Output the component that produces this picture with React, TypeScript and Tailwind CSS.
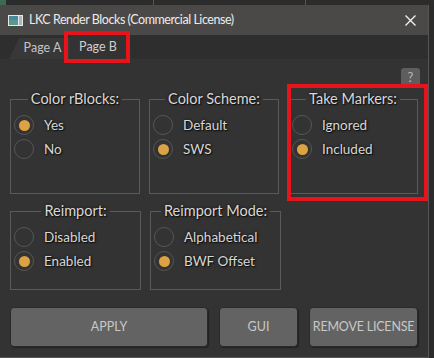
import React from "react";

const font = { fontFamily: 'Lato, "Noto Sans", "Liberation Sans", sans-serif' };

function Radio({ label, checked }: { label: string; checked?: boolean }) {
  return (
    <div className="flex items-center h-[24px]">
      <div className="w-[20px] h-[20px] rounded-full border border-[#565656] flex items-center justify-center shrink-0">
        {checked && <div className="w-[11px] h-[11px] rounded-full bg-[#dca243]" />}
      </div>
      <span className="ml-[10px] text-[13.5px] text-[#d6d6d6] [text-shadow:0_0_3px_#111,1px_1px_1px_#111]">{label}</span>
    </div>
  );
}

function Group({ title, items, sel, h }: { title: string; items: string[]; sel: number; h: number }) {
  return (
    <fieldset
      className="border border-[#5a5a5a] w-[131px] px-[3px] pt-[5px] m-0"
      style={{ height: h }}
    >
      <legend className="mx-auto px-[3px] text-[14.5px] leading-[18px] text-[#d8d8d8] [text-shadow:0_0_3px_#111,1px_1px_1px_#111]">
        {title}
      </legend>
      <div className="flex flex-col">
        {items.map((it, i) => (
          <Radio key={it} label={it} checked={i === sel} />
        ))}
      </div>
    </fieldset>
  );
}

export default function App() {
  return (
    <div className="w-[434px] h-[358px] bg-[#2b2b2b] overflow-hidden relative" style={font}>
      {/* background strip */}
      <div className="h-[5px] flex bg-[#2c2c2c]">
        <div className="w-[6px] bg-[#3d6a52]" />
        <div className="w-[148px] border-r border-[#555]" />
        <div className="w-[152px] border-r border-[#555]" />
      </div>
      <div className="w-[429px] border-r border-b border-[#555] bg-[#333333] h-[353px] flex flex-col">
        {/* title bar */}
        <div className="h-[30px] bg-[#4a4947] flex items-center pl-[8px] pr-[12px]">
          <svg width="15" height="11" viewBox="0 0 15 11" className="shrink-0">
            <rect x="0" y="0" width="15" height="11" fill="#e8e8e8" />
            <rect x="1" y="1" width="9" height="9" fill="#5a9a8a" />
            <rect x="1" y="1" width="9" height="4" fill="#4a86a6" />
            <rect x="11" y="1" width="3" height="9" fill="#a8b8c0" />
          </svg>
          <span className="ml-[6px] text-[12.5px] tracking-[-0.45px] text-[#ececec]">LKC Render Blocks (Commercial License)</span>
          <div className="flex-1" />
          <svg width="11" height="11" viewBox="0 0 11 11">
            <path d="M0.5 0.5 L10.5 10.5 M10.5 0.5 L0.5 10.5" stroke="#f0f0f0" strokeWidth="1.4" />
          </svg>
        </div>
        {/* tabs */}
        <div className="h-[24px] bg-[#2e2e2e] flex items-end relative">
          <div className="ml-[9px] h-[21px] w-[61px] bg-[#383838] [clip-path:polygon(10px_0,100%_0,100%_100%,0_100%)] flex items-center justify-center pl-[6px] text-[12.5px] text-[#c4c4c4] whitespace-nowrap">
            Page A
          </div>
          <div className="h-[24px] w-[62px] bg-[#333333] [clip-path:polygon(0_0,calc(100%-8px)_0,100%_100%,0_100%)] flex items-start justify-center pr-[6px] pt-[3px] text-[12.5px] text-[#d0d0d0] whitespace-nowrap">
            Page B
          </div>
          <div className="absolute left-[64px] top-[-4px] w-[66px] h-[32px] border-[4px] border-[#e8141c]" />
        </div>
        {/* body */}
        <div className="flex-1 relative px-[10px]">
          <div className="flex justify-end pt-[9px] mr-[-2px]">
            <div className="w-[19px] h-[18px] rounded-[3px] bg-[#5e5e5e] text-[#b8b8b8] text-[13px] leading-[18px] text-center">?</div>
          </div>
          <div className="flex gap-[9px] mt-[4px]">
            <Group title="Color rBlocks:" items={["Yes", "No"]} sel={0} h={104} />
            <Group title="Color Scheme:" items={["Default", "SWS"]} sel={1} h={104} />
            <Group title="Take Markers:" items={["Ignored", "Included"]} sel={1} h={104} />
          </div>
          <div className="flex gap-[9px] mt-[8px]">
            <Group title="Reimport:" items={["Disabled", "Enabled"]} sel={1} h={88} />
            <Group title="Reimport Mode:" items={["Alphabetical", "BWF Offset"]} sel={1} h={88} />
          </div>
          <div className="flex gap-[11px] mt-[17px] text-[12.5px] text-[#c8c8c8] whitespace-nowrap">
            <button className="w-[200px] h-[40px] rounded-[4px] bg-[#636363] border border-[#2a2a2a] shadow-[1px_1px_1px_#222]">APPLY</button>
            <button className="w-[80px] h-[40px] rounded-[4px] bg-[#636363] border border-[#2a2a2a] shadow-[1px_1px_1px_#222]">GUI</button>
            <button className="w-[110px] h-[40px] rounded-[4px] bg-[#636363] border border-[#2a2a2a] shadow-[1px_1px_1px_#222] tracking-[-0.2px]">REMOVE LICENSE</button>
          </div>
          <div className="absolute left-[287px] top-[25px] w-[141px] h-[117px] border-[4px] border-[#e8141c]" />
        </div>
      </div>
    </div>
  );
}
